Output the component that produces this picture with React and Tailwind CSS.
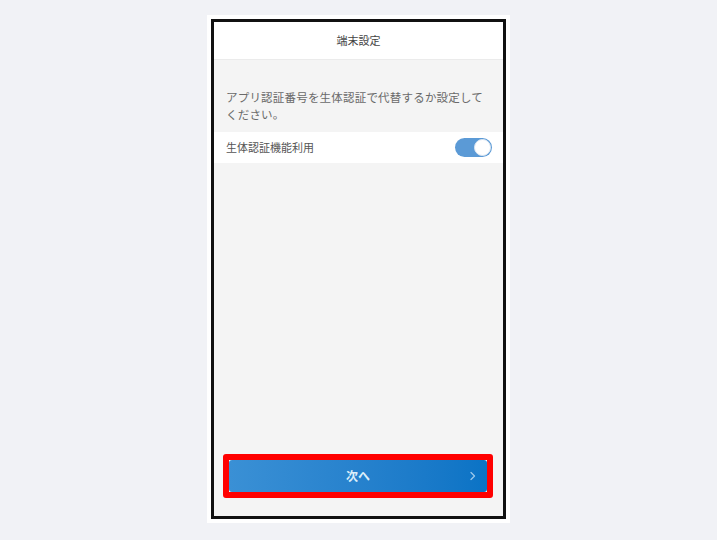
import React, { useState } from 'react';

const App = () => {
  const [bio, setBio] = useState(true);

  return (
    <div className="min-h-screen w-full bg-[#f1f2f6] flex justify-center pt-[15px]" style={{ fontFamily: '"Noto Sans CJK JP", "Noto Sans", sans-serif' }}>
      {/* phone frame */}
      <div className="w-[303px] h-[508px] bg-white p-[4px]">
        <div className="h-full border-[3px] border-[#111] flex flex-col bg-[#f4f4f4]">
          {/* header */}
          <div className="h-[38px] bg-white border-b border-[#ebebeb] flex items-center justify-center">
            <span className="text-[11px] text-[#444]">端末設定</span>
          </div>

          {/* description */}
          <div className="pt-[29px] px-[12px] pb-[9px]">
            <p className="text-[11.5px] leading-[17px] text-[#6a6a6a] tracking-[0.2px]">
              アプリ認証番号を生体認証で代替するか設定してください。
            </p>
          </div>

          {/* toggle row */}
          <div className="h-[31px] bg-white flex items-center justify-between pl-[12px] pr-[11px]">
            <span className="text-[11px] text-[#555]">生体認証機能利用</span>
            <button
              onClick={() => setBio(!bio)}
              className={`w-[37px] h-[19px] rounded-full flex items-center px-[1px] ${bio ? 'bg-[#5b9ad6] justify-end' : 'bg-[#d0d0d0] justify-start'}`}
            >
              <span className="w-[17px] h-[17px] rounded-full bg-white border border-[#dfe8f2]"></span>
            </button>
          </div>

          <div className="flex-1"></div>

          {/* next button */}
          <div className="pl-[9px] pr-[10px] pb-[18px]">
            <div className="rounded-[3px] border-[6px] border-[#ff0000] bg-white">
              <button className="relative w-full h-[32px] rounded-[3px] bg-gradient-to-r from-[#3a90d5] to-[#0a73c5] flex items-center justify-center">
                <span className="text-[12px] font-bold text-[#dbeefa]">次へ</span>
                <svg className="absolute right-[11px] top-1/2 -translate-y-1/2" width="6" height="9" viewBox="0 0 6 9" fill="none">
                  <path d="M1 1l3.5 3.5L1 8" stroke="#9cc8ea" strokeWidth="1.3" strokeLinecap="round" strokeLinejoin="round" />
                </svg>
              </button>
            </div>
          </div>
        </div>
      </div>
    </div>
  );
};

export default App;
